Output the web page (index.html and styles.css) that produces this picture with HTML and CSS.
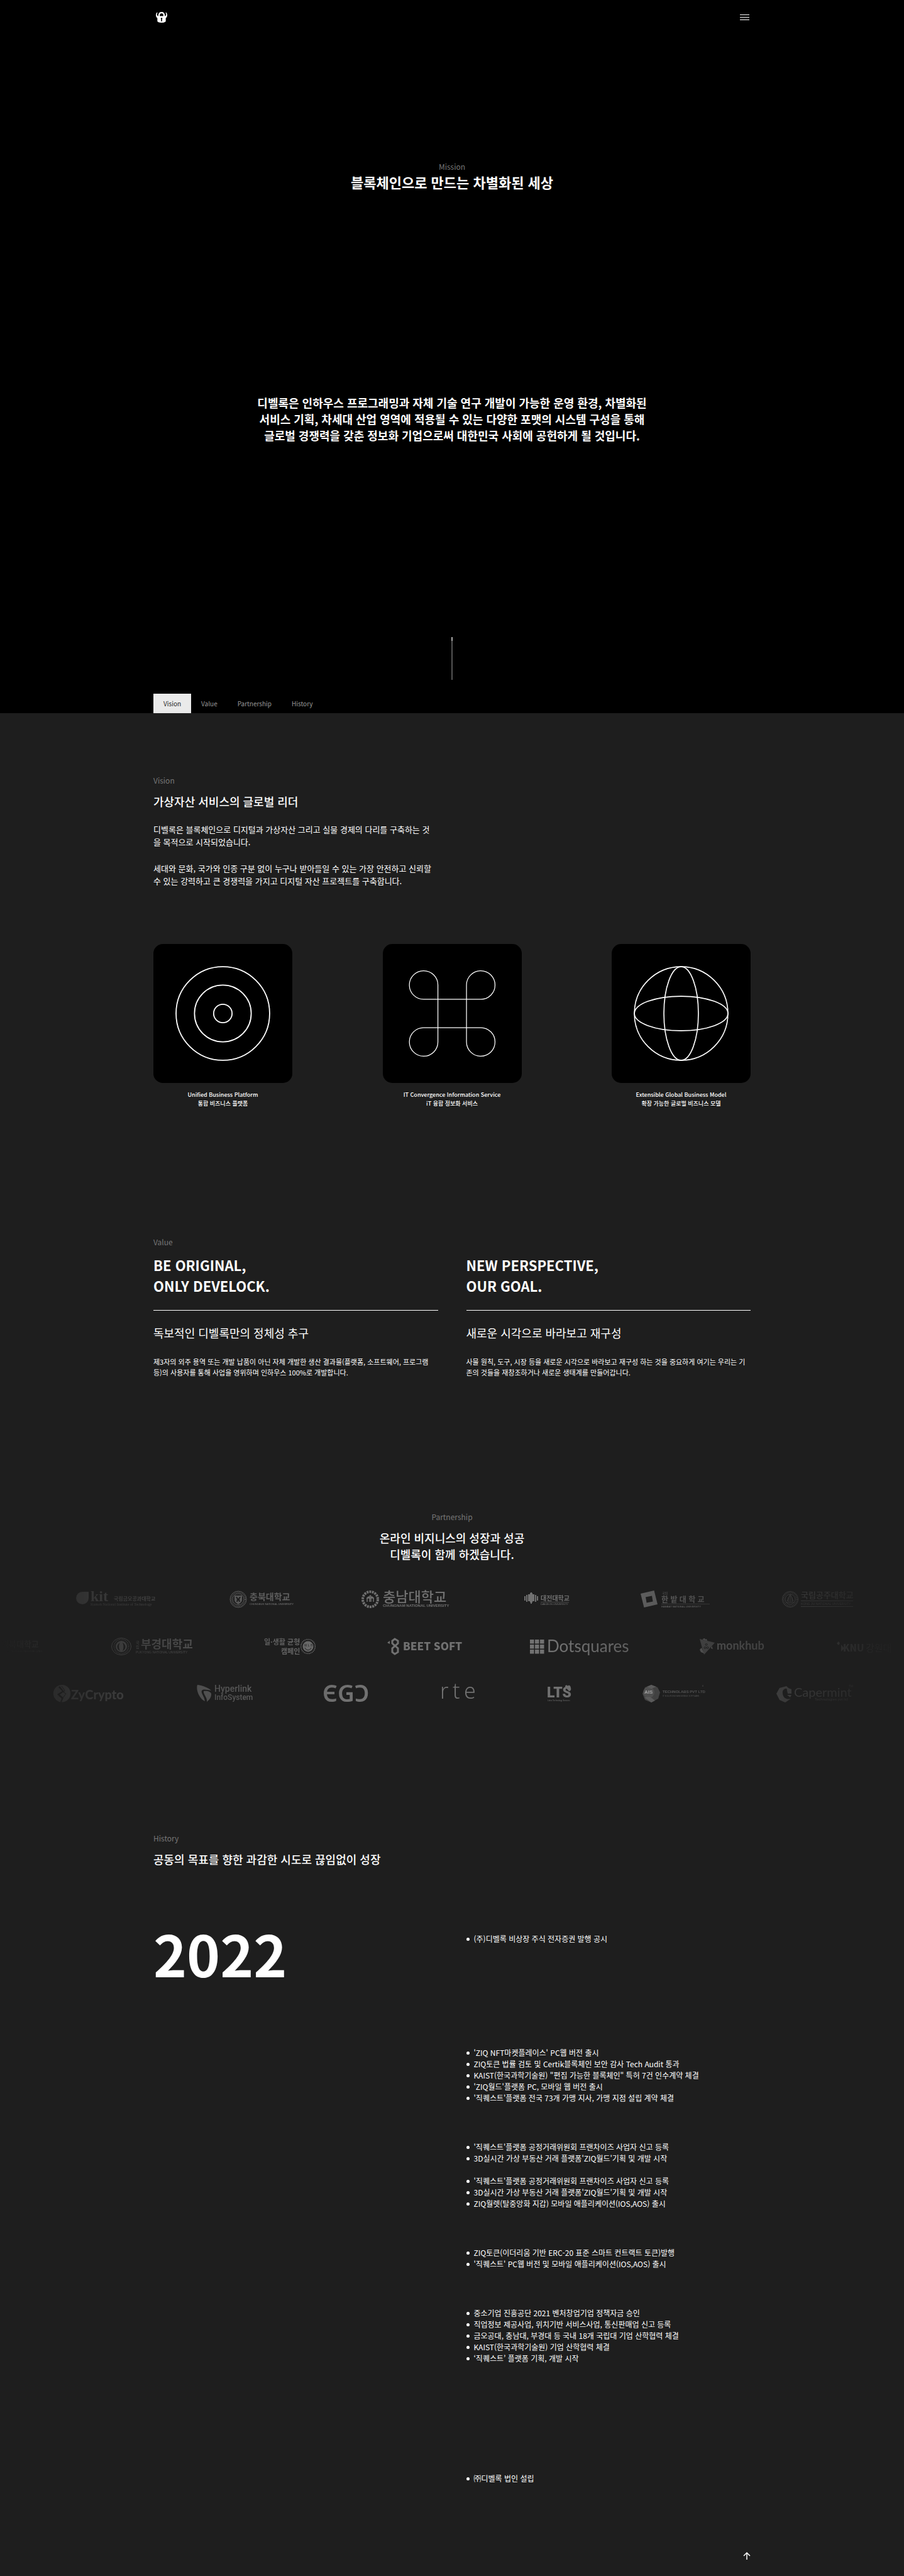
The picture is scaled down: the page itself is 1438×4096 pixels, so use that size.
FILE: index.html
```html
<!DOCTYPE html>
<html lang="ko">
<head>
<meta charset="utf-8">
<meta name="viewport" content="width=device-width, initial-scale=1">
<title>DEVELOCK</title>
<link rel="stylesheet" href="styles.css">
</head>
<body id="top">
<div class="intro">
  <header class="wrap header">
    <a class="brand" href="#top" aria-label="DEVELOCK">
      <svg width="18" height="17" viewBox="0 0 70 66"><path fill="#fff" d="M8 2c3 4 0 7-1 11-2 7 2 11 8 12V20C15 8 23 0 35 0s20 8 20 20v5c6-1 10-5 8-12-1-4-4-7-1-11 6 5 8 11 8 18 0 8-4 14-9 18v18c0 6-12 10-26 10S9 62 9 56V38C4 34 0 28 0 20 0 13 2 7 8 2zM24 25h22v-4c0-7-4-12-11-12s-11 5-11 12z"/><path d="M35 36a5 5 0 0 1 3 9v13h-6V45a5 5 0 0 1 3-9z"/></svg>
    </a>
    <button class="menu" type="button" aria-label="메뉴"><span></span><span></span><span></span></button>
  </header>
  <section class="mission">
    <p class="label">Mission</p>
    <h1>블록체인으로 만드는 차별화된 세상</h1>
    <p class="statement">디벨록은 인하우스 프로그래밍과 자체 기술 연구 개발이 가능한 운영 환경, 차별화된<br>서비스 기획, 차세대 산업 영역에 적용될 수 있는 다양한 포맷의 시스템 구성을 통해<br>글로벌 경쟁력을 갖춘 정보화 기업으로써 대한민국 사회에 공헌하게 될 것입니다.</p>
    <div class="scroll-line"></div>
  </section>
  <nav class="wrap tabs">
    <a class="tab active" href="#vision">Vision</a>
    <a class="tab" href="#value">Value</a>
    <a class="tab" href="#partnership">Partnership</a>
    <a class="tab" href="#history">History</a>
  </nav>
</div>
<main>
  <section class="wrap vision" id="vision">
    <p class="label">Vision</p>
    <h2>가상자산 서비스의 글로벌 리더</h2>
    <div class="vision-text">
      <p>디벨록은 블록체인으로 디지털과 가상자산 그리고 실물 경제의 다리를 구축하는 것<br>을 목적으로 시작되었습니다.</p>
      <p>세대와 문화, 국가와 인종 구분 없이 누구나 받아들일 수 있는 가장 안전하고 신뢰할<br>수 있는 강력하고 큰 경쟁력을 가지고 디지털 자산 프로젝트를 구축합니다.</p>
    </div>
    <div class="cards">
      <figure>
        <svg viewBox="-147 -147 294 294"><g fill="none" stroke="#fff" stroke-width="2.4"><circle r="99"/><circle r="60"/><circle r="19.5"/></g></svg>
        <figcaption>Unified Business Platform<br>통합 비즈니스 플랫폼</figcaption>
      </figure>
      <figure>
        <svg viewBox="-147 -147 294 294"><path fill="none" stroke="#fff" stroke-width="1.7" d="M-30.500-60.500V60.500A30.200 30.200 0 1 1-60.500 30H60.500A30.200 30.200 0 1 1 30 60.500V-60.500A30.200 30.200 0 1 1 60.500-30H-60.500A30.200 30.200 0 1 1-30.500-60.500Z"/></svg>
        <figcaption>IT Convergence Information Service<br>iT 융합 정보화 서비스</figcaption>
      </figure>
      <figure>
        <svg viewBox="-147 -147 294 294"><g fill="none" stroke="#fff" stroke-width="2.200"><circle r="99"/><ellipse rx="36.500" ry="99"/><ellipse rx="99" ry="36.500"/></g></svg>
        <figcaption>Extensible Global Business Model<br>확장 가능한 글로벌 비즈니스 모델</figcaption>
      </figure>
    </div>
  </section>

  <section class="wrap value" id="value">
    <p class="label">Value</p>
    <div class="columns">
      <article>
        <h2>BE ORIGINAL,<br>ONLY DEVELOCK.</h2>
        <h3>독보적인 디벨록만의 정체성 추구</h3>
        <p>제3자의 외주 용역 또는 개발 납품이 아닌 자체 개발한 생산 결과물(플랫폼, 소프트웨어, 프로그램<br>등)의 사용자를 통해 사업을 영위하며 인하우스 100%로 개발합니다.</p>
      </article>
      <article>
        <h2>NEW PERSPECTIVE,<br>OUR GOAL.</h2>
        <h3>새로운 시각으로 바라보고 재구성</h3>
        <p>사물 원칙, 도구, 시장 등을 새로운 시각으로 바라보고 재구성 하는 것을 중요하게 여기는 우리는 기<br>존의 것들을 재창조하거나 새로운 생태계를 만들어갑니다.</p>
      </article>
    </div>
  </section>

  <section class="partnership" id="partnership">
    <p class="label">Partnership</p>
    <h2>온라인 비지니스의 성장과 성공<br>디벨록이 함께 하겠습니다.</h2>
    <div class="logos">
      <div class="logo-row row-one">
        <svg width="130" height="28"><path d="M10 2h10v10a10 10 0 1 1-20 0A10 10 0 0 1 10 2z"/><text class="serif" x="23" y="17" font-size="24" font-weight="700">kit</text><text x="60" y="16" font-size="8" font-weight="700">국립금오공과대학교</text><text class="serif" x="23" y="24" font-size="6">Kumoh National Institute of Technology</text></svg>
        <svg width="96" height="28"><g class="line"><circle cx="14" cy="14" r="13"/><circle cx="14" cy="14" r="11" stroke-width="2" stroke-dasharray="1 1.500"/><circle cx="14" cy="14" r="9"/></g><path d="M8 8h12v7c0 3-3 5-6 7-3-2-6-4-6-7zm2 2 2 4-1 4h2l1-3 1 3h2l-1-4 2-4h-2l-2 3-2-3z" fill-rule="evenodd"/><text x="32" y="15" font-size="14" font-weight="700">충북대학교</text><text class="narrow" x="32" y="23" font-size="4" font-weight="700">CHUNGBUK NATIONAL UNIVERSITY</text></svg>
        <svg width="145" height="28"><g class="line"><circle cx="14" cy="14" r="12" stroke-width="4" stroke-dasharray="3 1.200"/><path stroke-width="1.500" d="M9 18v-6l2-2 2 2v6M13 18v-9l1-1 1 1v9M15 18v-6l2-2 2 2v6M8 12h12"/></g><text x="34" y="18" font-size="22" font-weight="500">충남대학교</text><text x="34" y="26" class="sans" font-size="6" font-weight="700">CHUNGNAM NATIONAL UNIVERSITY</text></svg>
        <svg width="71" height="28"><path d="M0 9h2v7H0zm3-2h2v11H3zm3-1h3V4h1V3h2v1h1v2h3v11h-3v2h-1v2h-2v-2H9v-2H6zm11 1h2v11h-2zm3 2h2v7h-2z"/><text x="26" y="16" font-size="10" font-weight="700">대전대학교</text><path d="M26 18h45v.5H26z"/><text class="narrow" x="26" y="23" font-size="4">DAEJEON UNIVERSITY</text></svg>
        <svg width="111" height="28"><path fill-rule="evenodd" d="M0 5 21.500 0 27 22 5.500 27zM8 10.500l1.600 9 10-2-1.600-9z"/><text x="34" y="6" font-size="5">국립</text><text x="33" y="19" font-size="12" font-weight="700">한 밭 대 학 교</text><path d="M33 21h77v.5H33z"/><text class="sans" x="33" y="27" font-size="4" font-weight="700">HANBAT NATIONAL UNIVERSITY</text></svg>
        <svg width="113" height="28"><g class="line"><circle cx="13" cy="14" r="12.500"/><circle cx="13" cy="14" r="10.500" stroke-width="2" stroke-dasharray="1 1.500"/><circle cx="13" cy="14" r="8"/><path d="M6 19h14M8 17l5-11 5 11M10 11v7M16 11v7M13 8v10"/></g><text x="30" y="12" font-size="13" font-weight="500">국립공주대학교</text><path d="M30 16h83v1H30zM30 25h83v1H30z"/><text class="narrow" x="30" y="23" font-size="5">KONG JU NATIONAL UNIVERSITY</text></svg>
      </div>
      <div class="logo-row row-two">
        <svg width="63" height="28"><text x="2" y="15" font-size="13" font-weight="700">경북대학교</text><text class="narrow" x="10" y="23" font-size="4">KYUNGPOOK NATIONAL UNIV.</text></svg>
        <svg width="131" height="28"><g class="line"><ellipse cx="16" cy="14" rx="15.500" ry="13.500"/><circle cx="16" cy="14" r="11.500" stroke-width="2" stroke-dasharray="1 1.500"/></g><path fill-rule="evenodd" d="M16 5a9 9 0 1 1 0 18 9 9 0 0 1 0-18zm-2 3c-6 3-6 10 0 13-2-4-3-9 0-13zm4 0c2 4 2 9 0 13 6-3 6-10 0-13z"/><text x="39" y="10" font-size="6">국</text><text x="39" y="17" font-size="6">립</text><text x="47" y="17" font-size="18" font-weight="700">부경대학교</text><text class="sans" x="39" y="25" font-size="5">PUKYONG NATIONAL UNIVERSITY</text></svg>
        <svg width="80" height="28"><text x="-2" y="11" font-size="11" font-weight="700">일·생활 균형</text><text x="25" y="26" font-size="11" font-weight="700">캠페인</text><circle class="line" cx="68" cy="14" r="11.300" stroke-width="1.500" stroke-dasharray="1.500 1"/><circle cx="68" cy="14" r="8.500"/><text class="cut" x="62" y="14" font-size="5">W L B</text><path class="cutline" d="M63 16c2 5 8 5 10 0"/></svg>
        <svg width="113" height="28"><path class="line" stroke-width="3" d="M12 13 8 9V5l4-3 5 3v4l-9 8v6l4 3 5-3v-6l-9-8"/><path d="M0 8l4-3v5z"/><text x="25" y="20" font-size="17" font-weight="900">BEET SOFT</text></svg>
        <svg width="156" height="28"><path d="M0 3h6.500v6.500H0zm8 0h6.500v6.500H8zm8 0h6.500v6.500H16zM0 11h6.500v6.500H0zm8 0h6.500v6.500H8zm8 0h6.500v6.500H16zM0 19h6.500v6.500H0zm8 0h6.500v6.500H8zm8 0h6.500v6.500H16z"/><text class="lato" x="27" y="23" font-size="26">Dotsquares</text></svg>
        <svg width="104" height="28"><path opacity=".7" d="M0 2 24 8 7 27z"/><path d="M5 2l3-1 1 2 2-1 1 3-7-2zM0 19l3-3 4 9-5-2zM18 17l3 1-2-5z"/><g class="cutline"><circle cx="10.500" cy="11" r="1.500"/><circle cx="8.500" cy="16" r="1.500"/><circle cx="12.500" cy="16" r="1.500"/></g><text class="lato" x="27" y="19" font-size="18" font-weight="700">monkhub</text></svg>
        <svg width="100" height="28"><path d="M3 6 5 9 3 12 0 9zM7 11l5 6-5 5z"/><text x="10" y="22" font-size="15" font-weight="900">KNU</text><text x="46" y="22" font-size="15">강원대</text></svg>
      </div>
      <div class="logo-row row-three">
        <svg width="114" height="28"><path fill-rule="evenodd" d="M13.500 0a13.700 13.700 0 0 1 0 27.500 13.700 13.700 0 0 1 0-27.500zM10 2 8 4l6 6-8 5 7 7-2 5 2 .500 3-7-6-5 7-5z"/><path class="cutline" d="m13 2 5 7-2 3 4 2-6 8"/><text class="lato" x="28" y="23" font-size="20" font-weight="900">ZyCrypto</text></svg>
        <svg width="88" height="28"><path d="M1 0c9 1 18 5 22 9-7-1-12-3-15 0-2 4 4 9 5 17-8-3-15-18-12-26z"/><path d="M11 10c6-1 12 1 12 5 0 5-3 9-7 12 1-7-6-12-5-17z"/><text class="roboto" x="28" y="11" font-size="14" font-weight="500">Hyperlink</text><text class="roboto" x="28" y="24" font-size="12" font-weight="500">InfoSystem</text></svg>
        <svg width="73" height="28" aria-label="EGO"><text class="noto" x="-2" y="27" font-size="37" font-weight="600">ЄGƆ</text></svg>
        <svg width="55" height="28"><g class="noto" font-size="34" font-weight="300"><text x="-2" y="22">r</text><text x="18" y="22">t</text><text x="36" y="22">e</text></g></svg>
        <svg width="37" height="28"><text class="roboto" x="-1" y="20" font-size="23" font-weight="900">LTS</text><path d="M28 3c0-3 3-3 4-1 2-3 5 0 5 3 1 3-1 5-3 5z"/><text class="narrow" x="0" y="26" font-size="3">Lotus Technology Services</text></svg>
        <svg width="99" height="28"><path opacity=".6" d="M14 0 24 4l4 8-3 10-11 6L4 24 0 14 4 4z"/><path d="M7 3 14 0l8 3-8 3zM3 20l11 8 6-3-8-6z"/><circle opacity=".5" cx="10" cy="12" r="9"/><text class="sans bright" x="3" y="14" font-size="8" font-weight="700">AIS</text><text class="sans" x="32" y="13" font-size="6" font-weight="700">TECHNOLABS PVT LTD</text><text class="narrow" x="32" y="19" font-size="3">IT SOLUTIONS  WEB  MOBILE  SOFTWARE</text><text x="95" y="4" font-size="4">®</text></svg>
        <svg width="122" height="28"><path d="M16 2 5 5 0 14l5 10 9 4 9-6c-7 2-12-1-13-8s4-8 5-8h5z"/><path d="M16 4l8 3v7h-6zM17 16h7l-2 4z"/><text class="lato" x="28" y="19" font-size="20">Capermint</text><text class="sans" x="61" y="25" font-size="6">Technologies pvt ltd</text><text class="sans" x="115" y="4" font-size="5">TM</text></svg>
      </div>
    </div>
  </section>

  <section class="wrap history" id="history">
    <p class="label">History</p>
    <h2>공동의 목표를 향한 과감한 시도로 끊임없이 성장</h2>
    <div class="columns timeline">
      <p class="year">2022</p>
      <div class="events">
        <ul class="far">
          <li>(주)디벨록 비상장 주식 전자증권 발행 공시</li>
        </ul>
        <ul class="near">
          <li>'ZIQ NFT마켓플레이스' PC웹 버전 출시</li>
          <li>ZIQ토큰 법률 검토 및 Certik블록체인 보안 감사 Tech Audit 통과</li>
          <li>KAIST(한국과학기술원) "편집 가능한 블록체인" 특허 7건 인수계약 체결</li>
          <li>'ZIQ월드'플랫폼 PC, 모바일 웹 버전 출시</li>
          <li>'직퀘스트'플랫폼 전국 73개 가맹 지사, 가맹 지점 설립 계약 체결</li>
        </ul>
        <ul class="tight">
          <li>'직퀘스트'플랫폼 공정거래위원회 프랜차이즈 사업자 신고 등록</li>
          <li>3D실시간 가상 부동산 거래 플랫폼'ZIQ월드'기획 및 개발 시작</li>
        </ul>
        <ul class="near">
          <li>'직퀘스트'플랫폼 공정거래위원회 프랜차이즈 사업자 신고 등록</li>
          <li>3D실시간 가상 부동산 거래 플랫폼'ZIQ월드'기획 및 개발 시작</li>
          <li>ZIQ월렛(탈중앙화 지갑) 모바일 애플리케이션(IOS,AOS) 출시</li>
        </ul>
        <ul class="near">
          <li>ZIQ토큰(이더리움 기반 ERC-20 표준 스마트 컨트랙트 토큰)발행</li>
          <li>'직퀘스트' PC웹 버전 및 모바일 애플리케이션(IOS,AOS) 출시</li>
        </ul>
        <ul class="last-gap">
          <li>중소기업 진흥공단 2021 벤처창업기업 정책자금 승인</li>
          <li>직업정보 제공사업, 위치기반 서비스사업, 통신판매업 신고 등록</li>
          <li>금오공대, 충남대, 부경대 등 국내 18개 국립대 기업 산학협력 체결</li>
          <li>KAIST(한국과학기술원) 기업 산학협력 체결</li>
          <li>‘직퀘스트’ 플랫폼 기획, 개발 시작</li>
        </ul>
        <ul>
          <li>㈜디벨록 법인 설립</li>
        </ul>
      </div>
    </div>
  </section>
</main>
<footer class="wrap footer">
  <a class="to-top" href="#top" aria-label="맨 위로"><svg width="12" height="14" viewBox="0 0 12 14"><path fill="none" stroke="#fff" stroke-width="1.500" d="M6 13V2M1 7l5-5 5 5"/></svg></a>
</footer>
</body>
</html>
```
FILE: styles.css
```css
* {
  box-sizing: border-box;
}

body {
  margin: 0;
  background: #1e1e1e;
  color: #fff;
  font-family: "Noto Sans CJK KR", sans-serif;
  font-size: 12px;
  line-height: 18px;
  overflow-x: hidden;
}

h1, h2, h3, p, ul, figure {
  margin: 0;
  padding: 0;
}

a {
  color: inherit;
  text-decoration: none;
}

.wrap {
  width: min(950px, 100% - 48px);
  margin: 0 auto;
}

.label {
  color: #777;
  font-size: 12px;
  line-height: 18px;
}

h2 {
  margin-top: 11px;
  font-size: 18px;
  line-height: 26px;
  font-weight: 500;
}

/* Intro */
.intro {
  background: #000;
}

.header {
  display: flex;
  align-items: center;
  justify-content: space-between;
  height: 54px;
}

.brand {
  display: flex;
  padding-left: 4px;
}

.menu {
  display: flex;
  flex-direction: column;
  gap: 3px;
  width: 15px;
  margin-right: 2px;
  padding: 0;
  border: 0;
  background: none;
}

.menu span {
  height: 1px;
  background: #fff;
}

.mission {
  display: flex;
  flex-direction: column;
  align-items: center;
  padding: 202px 0 22px;
  text-align: center;
}

.mission h1 {
  font-size: 22px;
  line-height: 30px;
  font-weight: 700;
}

.statement {
  margin-top: 323px;
  font-size: 18px;
  line-height: 26px;
  font-weight: 700;
}

.scroll-line {
  width: 2px;
  height: 68px;
  margin-top: 308px;
  background: linear-gradient(#aaa 6px, #555 6px);
}

.tabs {
  display: flex;
}

.tab {
  padding: 0 16px;
  color: #999;
  font-size: 10px;
  line-height: 31px;
}

.tab.active {
  background: #eaeaea;
  color: #1e1e1e;
}

/* Vision */
.vision {
  padding-top: 98px;
}

.vision-text {
  display: grid;
  gap: 22px;
  margin-top: 22px;
  font-size: 13px;
  line-height: 20px;
}

.cards {
  display: flex;
  justify-content: space-between;
  margin-top: 90px;
}

.cards figure {
  width: 221px;
}

.cards svg {
  display: block;
  width: 100%;
  border-radius: 15px;
  background: #000;
}

.cards figcaption {
  margin-top: 12px;
  font-size: 9px;
  line-height: 14px;
  font-weight: 500;
  text-align: center;
}

/* Value */
.value {
  padding-top: 204px;
}

.columns {
  display: grid;
  grid-template-columns: 1fr 1fr;
  gap: 45px;
}

.value h2 {
  padding-bottom: 22px;
  border-bottom: 1px solid #fff;
  font-size: 22px;
  line-height: 33px;
  font-weight: 700;
}

.value h3 {
  margin-top: 22px;
  font-size: 18px;
  line-height: 26px;
  font-weight: 400;
}

.value article p {
  margin-top: 25px;
  font-size: 11px;
  line-height: 17px;
}

/* Partnership */
.partnership {
  padding-top: 212px;
  text-align: center;
}

.logos {
  display: grid;
  gap: 47px;
  margin-top: 29px;
  padding: 16px 0;
  overflow: hidden;
  -webkit-mask-image: linear-gradient(90deg, transparent, #000 38%, #000 62%, transparent);
  mask-image: linear-gradient(90deg, transparent, #000 38%, #000 62%, transparent);
}

.logo-row {
  display: flex;
  gap: 114px;
  min-width: 0;
}

.logo-row svg {
  flex: none;
  fill: #717171;
  overflow: visible;
}

.row-one {
  padding-left: 121px;
}

.row-three {
  padding-left: 85px;
}

.line {
  fill: none;
  stroke: #717171;
}

.cut {
  fill: #1e1e1e;
}

.cutline {
  fill: none;
  stroke: #1e1e1e;
}

.bright {
  fill: #ccc;
}

.serif {
  font-family: "Liberation Serif", serif;
}

.sans {
  font-family: "Liberation Sans", sans-serif;
}

.narrow {
  font-family: "Liberation Sans Narrow", "Liberation Sans", sans-serif;
}

.lato {
  font-family: Lato, sans-serif;
}

.roboto {
  font-family: Roboto, sans-serif;
}

.noto {
  font-family: "Noto Sans", sans-serif;
}

/* History */
.history {
  padding-top: 191px;
}

.timeline {
  margin-top: 105px;
}

.year {
  font-size: 90px;
  line-height: 62px;
  font-weight: 700;
}

.events ul {
  list-style: none;
}

.events li {
  display: flex;
  align-items: center;
  gap: 7px;
}

.events li::before {
  content: "";
  flex: none;
  width: 5px;
  height: 5px;
  border-radius: 50%;
  background: #fff;
}

.events .far {
  margin-bottom: 163px;
}

.events .near {
  margin-bottom: 60px;
}

.events .tight {
  margin-bottom: 18px;
}

.events .last-gap {
  margin-bottom: 173px;
}

/* Footer */
.footer {
  display: flex;
  justify-content: flex-end;
  padding: 107px 0 24px;
}

.to-top {
  display: flex;
}
```
